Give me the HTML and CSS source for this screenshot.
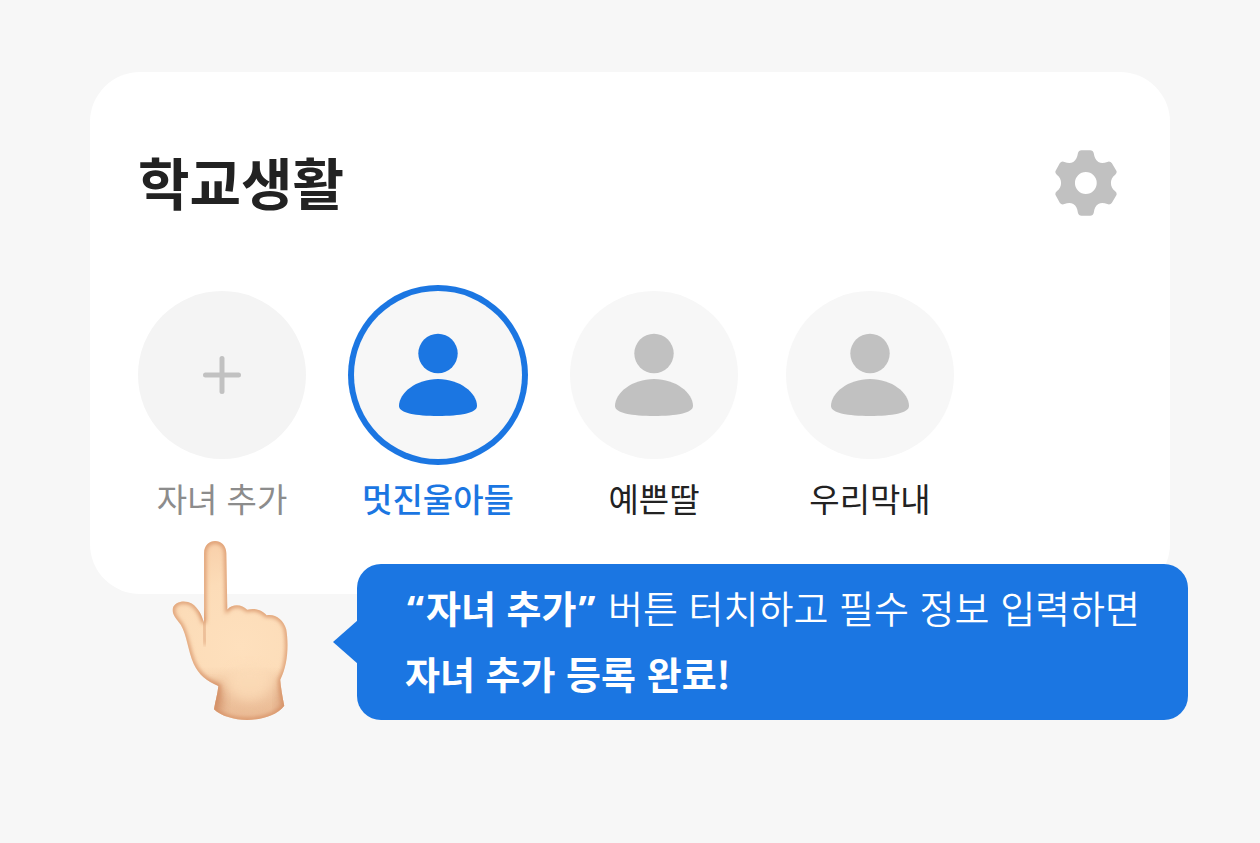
FILE: index.html
```
<!DOCTYPE html>
<html lang="ko">
	<head>
		<meta charset="UTF-8">
		<meta name="viewport" content="width=device-width, initial-scale=1">
		<title>학교생활</title>
		<link rel="stylesheet" href="styles.css">
	</head>
	<body>
		<main class="card">
			<header class="card-header">
				<h1>학교생활</h1>
				<button class="settings" type="button" aria-label="설정">
					<svg viewBox="75 59 187 200" width="62" height="66">
						<path fill="#c1c1c1" fill-rule="evenodd" d="M155 60H181Q190 60 192 69C194 81 197 89 206 95C214 100 223 99 233 95Q242 92 247 99L260 121Q264 128 257 134C248 141 244 149 244 159S248 177 257 184Q264 190 260 197L247 219Q242 226 233 223C223 219 214 218 206 223C197 229 194 237 192 249Q190 258 181 258H155Q146 258 144 249C142 237 139 229 130 223C122 218 113 219 103 223Q94 226 89 219L77 197Q73 190 80 184C89 177 93 169 93 159S89 141 80 134Q73 128 77 121L89 99Q94 92 103 95C113 99 122 100 130 95C139 89 142 81 144 69Q146 60 155 60ZM168 126A33 33 0 1 0 168 192A33 33 0 1 0 168 126Z"/>
					</svg>
				</button>
			</header>

			<div class="children">
				<button class="child add" type="button">
					<span class="avatar">
						<svg viewBox="0 0 38 38" width="38" height="38">
							<path d="M19 2.500V35.500M2.500 19H35.500" stroke="currentColor" stroke-width="5" stroke-linecap="round"/>
						</svg>
					</span>
					<span class="name">자녀 추가</span>
				</button>
				<button class="child active" type="button">
					<span class="avatar">
						<svg viewBox="0 0 80 84" width="80" height="84" fill="currentColor">
							<circle cx="40" cy="20.500" r="19.700"/>
							<path d="M40 46C62 46 79 60 79 73C79 80 62 83 40 83S1 80 1 73C1 60 18 46 40 46Z"/>
						</svg>
					</span>
					<span class="name">멋진울아들</span>
				</button>
				<button class="child" type="button">
					<span class="avatar">
						<svg viewBox="0 0 80 84" width="80" height="84" fill="currentColor">
							<circle cx="40" cy="20.500" r="19.700"/>
							<path d="M40 46C62 46 79 60 79 73C79 80 62 83 40 83S1 80 1 73C1 60 18 46 40 46Z"/>
						</svg>
					</span>
					<span class="name">예쁜딸</span>
				</button>
				<button class="child" type="button">
					<span class="avatar">
						<svg viewBox="0 0 80 84" width="80" height="84" fill="currentColor">
							<circle cx="40" cy="20.500" r="19.700"/>
							<path d="M40 46C62 46 79 60 79 73C79 80 62 83 40 83S1 80 1 73C1 60 18 46 40 46Z"/>
						</svg>
					</span>
					<span class="name">우리막내</span>
				</button>
			</div>

			<svg class="hand" viewBox="62 30 354 544" width="118" height="181" aria-hidden="true">
				<defs>
					<radialGradient id="palm" gradientUnits="userSpaceOnUse" cx="270" cy="350" r="330">
						<stop offset="0" stop-color="#fee0bd"/>
						<stop offset="0.6" stop-color="#fcdcb8"/>
						<stop offset="1" stop-color="#f8cfa9"/>
					</radialGradient>
					<linearGradient id="shade" gradientUnits="userSpaceOnUse" x1="0" x2="0" y1="410" y2="560">
						<stop offset="0" stop-color="#d08a62" stop-opacity="0"/>
						<stop offset="0.5" stop-color="#d08a62" stop-opacity="0.3"/>
						<stop offset="1" stop-color="#d08a62" stop-opacity="0.4"/>
					</linearGradient>
					<filter id="soft" x="-10%" y="-10%" width="120%" height="120%">
						<feGaussianBlur stdDeviation="6"/>
					</filter>
					<filter id="softer" x="-60%" y="-30%" width="220%" height="160%">
						<feGaussianBlur stdDeviation="16"/>
					</filter>
					<path id="outline" d="M161 70C161 21 227 21 228 70L231 239C248 220 276 224 291 240C315 232 338 243 349 256C375 251 400 269 408 298C416 343 413 407 390 450C392 476 397 502 402 528C359 583 236 583 191 539C195 515 202 492 204 469C169 455 145 435 130 403C112 361 110 318 91 285C77 266 64 254 67 236C72 213 106 210 124 221C145 235 154 256 161 279Z"/>
					<clipPath id="edge"><use href="#outline"/></clipPath>
				</defs>
				<use href="#outline" fill="url(#palm)"/>
				<g clip-path="url(#edge)">
					<path fill="url(#shade)" d="M150 410H416V574H150Z"/>
					<path fill="#c47e57" opacity="0.8" filter="url(#softer)" d="M175 462L214 470L212 550H170Z"/>
					<path fill="#c98660" opacity="0.7" filter="url(#softer)" d="M396 450L420 450V550H386Z"/>
					<ellipse cx="298" cy="462" rx="66" ry="52" fill="#fcdcb8" opacity="0.8" filter="url(#softer)"/>
					<use href="#outline" fill="none" stroke="#d68f64" stroke-width="11" filter="url(#soft)"/>
					<path fill="none" stroke="#d99a70" stroke-width="8" stroke-linecap="round" filter="url(#soft)" d="M161 270Q161 310 164 342"/>
				</g>
			</svg>

			<div class="tooltip" role="tooltip">
				<p><strong><span class="quote">“</span>자녀 추가<span class="quote">”</span></strong> 버튼 터치하고 필수 정보 입력하면</p>
				<p><strong>자녀 추가 등록 완료!</strong></p>
			</div>
		</main>
	</body>
</html>
```
FILE: styles.css
```
* {
	box-sizing: border-box;
}
body {
	margin: 0;
	padding: 72px 90px;
	min-height: 100vh;
	background-color: #f7f7f7;
	color: #222;
	font-family: "Noto Sans CJK KR", sans-serif;
}
button {
	padding: 0;
	border: 0;
	background: none;
	color: inherit;
	font: inherit;
	cursor: pointer;
}
svg {
	display: block;
}
.card {
	position: relative;
	padding: 72px 24px 72px;
	border-radius: 50px;
	background-color: #fff;
}
.card-header {
	display: flex;
	align-items: flex-start;
	justify-content: space-between;
	padding: 0 29px 0 24px;
}
.settings {
	margin-top: 6px;
}
h1 {
	margin: 0;
	font-size: 56px;
	line-height: 74px;
	font-weight: 700;
}
.children {
	display: flex;
	margin-top: 73px;
}
.child {
	display: flex;
	flex-direction: column;
	align-items: center;
	gap: 15px;
	width: 216px;
}
.avatar {
	display: flex;
	align-items: center;
	justify-content: center;
	width: 168px;
	height: 168px;
	border-radius: 50%;
	background-color: #f7f7f7;
	color: #c1c1c1;
}
.name {
	font-size: 33px;
	line-height: 48px;
}
.add .avatar {
	background-color: #f4f4f4;
}
.add .name {
	color: #8c8c8c;
}
.active .avatar {
	box-shadow: 0 0 0 6px #1b76e2;
	color: #1b76e2;
}
.active .name {
	color: #1b76e2;
	font-weight: 500;
}
.hand {
	position: absolute;
	top: 468px;
	left: 81px;
}
.tooltip {
	position: absolute;
	top: 492px;
	left: 267px;
	padding: 10px 48px 14px;
	border-radius: 24px;
	background-color: #1b76e2;
	color: #fff;
	font-size: 38px;
	line-height: 66px;
	font-weight: 350;
	white-space: nowrap;
}
.tooltip::before {
	content: "";
	position: absolute;
	top: 56px;
	left: -24px;
	border: solid transparent;
	border-width: 22px 25px 22px 0;
	border-right-color: #1b76e2;
}
.tooltip p {
	margin: 0;
}
.tooltip strong {
	font-weight: 700;
}
.quote {
	padding: 0 2px;
	font-family: "Noto Sans", sans-serif;
	line-height: 1;
}
```
